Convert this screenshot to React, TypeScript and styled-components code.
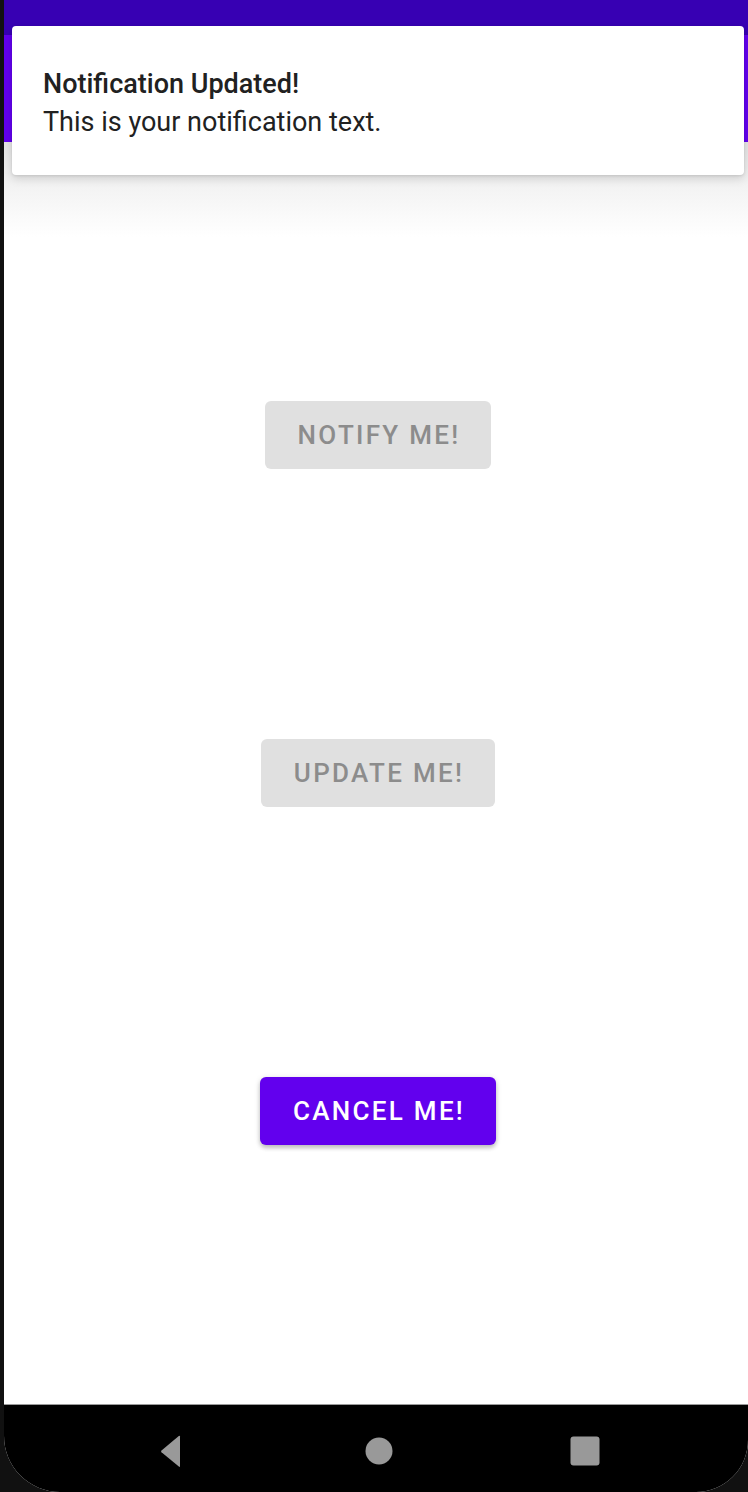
import styled, { createGlobalStyle } from "styled-components";

const GlobalStyle = createGlobalStyle`
  html, body {
    margin: 0;
    padding: 0;
    background: #111111;
  }
  body {
    font-family: Roboto, "Noto Sans", "Liberation Sans", sans-serif;
  }
`;

// 버튼 종류: 비활성(회색) / 활성(보라)
interface ActionButtonProps {
  $enabled?: boolean;
}

const Frame = styled.div`
  width: 748px;
  height: 1492px;
  display: flex;
  background: #111111;
  overflow: hidden;
`;

const Screen = styled.div`
  position: relative;
  flex: 1;
  margin-left: 4px;
  display: flex;
  flex-direction: column;
  background: #ffffff;
  border-radius: 0 0 52px 56px;
  overflow: hidden;
`;

const StatusBar = styled.div`
  height: 35px;
  background: #3700b3;
  flex-shrink: 0;
`;

const AppBar = styled.div`
  height: 107px;
  background: #6200ee;
  flex-shrink: 0;
`;

const Content = styled.main`
  flex: 1;
  display: flex;
  flex-direction: column;
  align-items: center;
  gap: 270px;
  padding: 259px 0 0 4px;
  background: linear-gradient(
      to bottom,
      #e3e3e3 0px,
      #f3f3f3 45px,
      #ffffff 95px
    )
    no-repeat;
`;

const ActionButton = styled.button<ActionButtonProps>`
  height: 68px;
  padding: 0 31px 0 33px;
  border: 0;
  border-radius: 6px;
  font-family: Roboto, "Noto Sans", "Liberation Sans", sans-serif;
  font-size: 26px;
  font-weight: 500;
  letter-spacing: 2.3px;
  text-transform: uppercase;
  background: ${(p) => (p.$enabled ? "#6200ee" : "#e0e0e0")};
  color: ${(p) => (p.$enabled ? "#ffffff" : "#8c8c8c")};
  box-shadow: ${(p) =>
    p.$enabled
      ? "0 3px 4px rgba(0, 0, 0, 0.2), 0 1px 6px rgba(0, 0, 0, 0.12)"
      : "none"};
`;

const NavBar = styled.nav`
  box-sizing: border-box;
  height: 88px;
  flex-shrink: 0;
  background: #000000;
  border-top: 1px solid #9a9a9a;
  display: flex;
  align-items: center;
  justify-content: space-between;
  padding: 4px 146px 0 151px;
`;

const NavIcon = styled.svg`
  width: 34px;
  height: 34px;
  fill: #999999;
`;

// 알림 카드 (상단 오버레이)
const NotificationCard = styled.div`
  position: absolute;
  top: 26px;
  left: 8px;
  right: 4px;
  height: 149px;
  box-sizing: border-box;
  padding: 42px 31px 0;
  background: #ffffff;
  border-radius: 4px;
  box-shadow: 0 4px 10px rgba(0, 0, 0, 0.12), 0 1px 3px rgba(0, 0, 0, 0.1);
`;

const NoticeTitle = styled.p`
  margin: 0;
  font-size: 27px;
  font-weight: 500;
  line-height: 32px;
  color: #212121;
`;

const NoticeText = styled.p`
  margin: 6px 0 0;
  font-size: 27px;
  font-weight: 400;
  line-height: 32px;
  color: #212121;
`;

function App() {
  return (
    <>
      <GlobalStyle />
      <Frame>
        <Screen>
          <StatusBar />
          <AppBar />
          <Content>
            <ActionButton>Notify Me!</ActionButton>
            <ActionButton>Update Me!</ActionButton>
            <ActionButton $enabled>Cancel Me!</ActionButton>
          </Content>
          <NavBar>
            <NavIcon viewBox="0 0 34 34">
              <path d="M25 2.5 L25 32 Q25 33.5 23.8 32.6 L6.5 18.3 Q5.6 17.3 6.5 16.4 L23.8 2 Q25 1.2 25 2.5 Z" />
            </NavIcon>
            <NavIcon viewBox="0 0 34 34">
              <circle cx="17" cy="17" r="13.5" />
            </NavIcon>
            <NavIcon viewBox="0 0 34 34">
              <rect x="2.5" y="2.5" width="29" height="29" rx="3" />
            </NavIcon>
          </NavBar>
          <NotificationCard>
            <NoticeTitle>Notification Updated!</NoticeTitle>
            <NoticeText>This is your notification text.</NoticeText>
          </NotificationCard>
        </Screen>
      </Frame>
    </>
  );
}

export default App;
